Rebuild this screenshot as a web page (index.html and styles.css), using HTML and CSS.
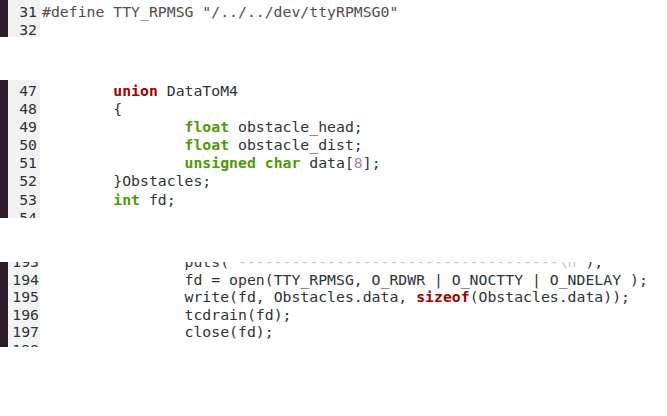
FILE: index.html
```html
<!DOCTYPE html>
<html>
<head>
<meta charset="utf-8">
<link rel="stylesheet" href="styles.css">
</head>
<body>
<div class="page">
  <div class="frag f1">
    <div class="bar"></div>
    <div class="gutter"><div class="ln">31</div><div class="ln">32</div></div>
<pre class="code"><span class="pp">#define TTY_RPMSG "/../../dev/ttyRPMSG0"</span>
</pre>
  </div>

  <div class="frag f2">
    <div class="bar"></div>
    <div class="gutter"><div class="ln">47</div><div class="ln">48</div><div class="ln">49</div><div class="ln">50</div><div class="ln">51</div><div class="ln">52</div><div class="ln">53</div><div class="ln">54</div></div>
<pre class="code">	<span class="kw">union</span> DataToM4
	{
		<span class="ty">float</span> obstacle_head;
		<span class="ty">float</span> obstacle_dist;
		<span class="ty">unsigned char</span> data[<span class="num">8</span>];
	}Obstacles;
	<span class="ty">int</span> fd;
</pre>
  </div>

  <div class="frag f3">
    <div class="bar"></div>
    <div class="inner">
      <div class="gutter"><div class="ln">193</div><div class="ln">194</div><div class="ln">195</div><div class="ln">196</div><div class="ln">197</div><div class="ln">198</div></div>
<pre class="code">		puts(<span class="str">"------------------------------------\n"</span>);
		fd = open(TTY_RPMSG, O_RDWR | O_NOCTTY | O_NDELAY );
		write(fd, Obstacles.data, <span class="kw">sizeof</span>(Obstacles.data));
		tcdrain(fd);
		close(fd);
</pre>
    </div>
  </div>
</div>
</body>
</html>
```

FILE: styles.css
```css
html, body {
  margin: 0;
  padding: 0;
  background: #ffffff;
}

.page {
  width: 667px;
  height: 416px;
  display: flex;
  flex-direction: column;
}

.frag {
  display: flex;
  overflow: hidden;
  font-family: "DejaVu Sans Mono", "Liberation Mono", monospace;
  font-size: 14.8px;
  color: #2e3436;
}

.bar {
  width: 8px;
  flex: none;
  background: #2c1d2a;
}

.gutter {
  flex: none;
  background: #f2f2f2;
  color: #2e3436;
  text-align: right;
}

.code {
  margin: 0;
  font: inherit;
  tab-size: 8;
  -moz-tab-size: 8;
  white-space: pre;
}

/* fragment 1 */
.f1 {
  height: 37px;
  line-height: 18px;
}
.f1 .gutter {
  width: 29px;
  padding: 3px 3px 0 0;
}
.f1 .code {
  padding: 3px 0 0 2px;
}

/* fragment 2 */
.f2 {
  margin-top: 43px;
  height: 138px;
  line-height: 18.1px;
}
.f2 .gutter {
  width: 29px;
  padding: 2px 3px 0 0;
}
.f2 .code {
  padding: 2px 0 0 2px;
}

/* fragment 3 */
.f3 {
  margin-top: 44px;
  height: 85px;
  line-height: 17.6px;
}
.f3 .inner {
  display: flex;
  margin-top: -9px;
}
.f3 .gutter {
  width: 31px;
  padding-right: 1px;
  background: #f3f4f5;
}
.f3 .code {
  padding-left: 2px;
}

.pp { color: #574b4b; }
.kw { color: #a40000; font-weight: bold; }
.ty { color: #4e9a06; font-weight: bold; }
.num { color: #ad7fa8; }
.str { color: #c8c8c8; }
```
